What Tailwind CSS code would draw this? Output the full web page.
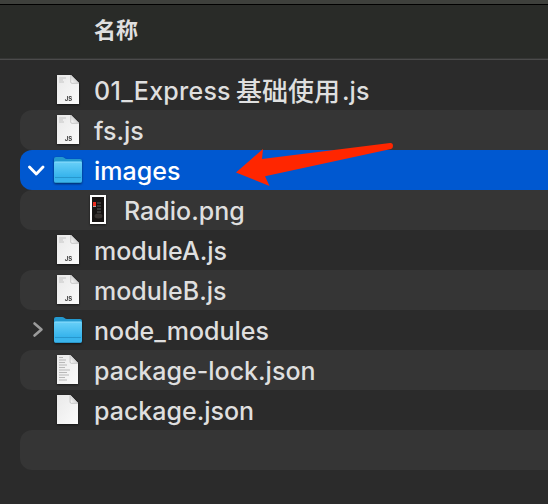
<!DOCTYPE html>
<html lang="zh">
<head>
<meta charset="utf-8">
<title>Files</title>
<script src="https://cdn.jsdelivr.net/npm/@tailwindcss/browser@4"></script>
</head>
<body class="w-[548px] h-[504px] overflow-hidden bg-[#2b2b2b] font-[Inter,'Noto_Sans_CJK_SC',sans-serif] text-[#dfdfdf]">
<svg class="absolute w-0 h-0">
  <defs>
    <linearGradient id="paper" x1="0" y1="0" x2="1" y2="1"><stop offset="0" stop-color="#e9e9e9"/><stop offset="1" stop-color="#fbfbfb"/></linearGradient>
    <linearGradient id="fold" x1="0" y1="1" x2="1" y2="0"><stop offset="0" stop-color="#fff"/><stop offset=".5" stop-color="#d4d4d4"/><stop offset="1" stop-color="#aaa"/></linearGradient>
    <linearGradient id="blue" x1="0" y1="0" x2="0" y2="1"><stop offset="0" stop-color="#69d0f8"/><stop offset=".7" stop-color="#37b4ec"/><stop offset="1" stop-color="#3cb5ec"/></linearGradient>
    <symbol id="page" viewBox="0 0 22 29" preserveAspectRatio="none"><path d="M0 0h14l8 8v21H0z" fill="url(#paper)"/><path d="M14 0v6.500q0 1.500 1.500 1.500H22z" fill="url(#fold)"/><path d="M13.700 0v7q0 1.300 1.300 1.300h7" fill="none" stroke="#aaa" stroke-width=".6"/></symbol>
    <symbol id="js" viewBox="0 0 22 29"><use href="#page"/><path d="M2 3h7M2 5h4M2 7h5" stroke="#bbb" stroke-width=".8"/><text x="11.500" y="25.800" text-anchor="middle" font-size="6" font-weight="700" fill="#444" textLength="7.500" lengthAdjust="spacingAndGlyphs">JS</text></symbol>
    <symbol id="folder" viewBox="0 0 28 26"><path d="M0 2Q0 0 2 0h6q1.500 0 2.500 1t2.500 1h13q2 0 2 2v18H0z" fill="#2499cf"/><path d="M0 6q0-1.500 1.500-1.500h25Q28 4.500 28 6v18q0 2-2 2H2q-2 0-2-2z" fill="url(#blue)"/><path d="M.5 5.200h27" stroke="#8adcfb" stroke-width=".8"/><path d="M1 20.500h26" stroke="#238fc5" stroke-width=".8"/><path d="M1 25.500h26" stroke="#278fc2" stroke-width=".8"/></symbol>
  </defs>
</svg>
<main class="relative w-full h-full">
  <div class="h-1 bg-[#3e403c]"></div>
  <div class="h-px bg-black"></div>
  <header class="h-[53px] bg-[#292b28] pl-[94px]"><div class="text-[22px] leading-[46px] font-bold font-['Noto_Sans_CJK_SC',sans-serif]">名称</div></header>
  <div class="h-px bg-[#353635]"></div>
  <div class="h-px bg-[#4b4b4b]"></div>
  <ul class="pt-[10px] pl-5 text-[25px] leading-[43px] font-medium">
    <li class="h-10 flex rounded-l-[12px]"><svg class="ml-[37px] mt-[5px] mr-[15px] w-[22px] h-[29px] drop-shadow-[0_1px_1px_#0008]"><use href="#js"/></svg><span class="w-[142px] tracking-[0.25px]">01_Express</span><span class="font-['Noto_Sans_CJK_SC',sans-serif] text-[26px] leading-10 w-[106px]">基础使用</span><span>.js</span></li>
    <li class="h-10 flex rounded-l-[12px] bg-[#353535]"><svg class="ml-[37px] mt-[5px] mr-[15px] w-[22px] h-[29px] drop-shadow-[0_1px_1px_#0008]"><use href="#js"/></svg><span>fs.js</span></li>
    <li class="h-10 flex rounded-l-[12px] bg-[#0058d0] text-white"><svg class="ml-2 mt-[15px] mr-[9px] w-[17px] h-[12px]"><path d="M1.500 2 8.300 9 15 2" fill="none" stroke="#fff" stroke-width="2.800" stroke-linecap="round" stroke-linejoin="round"/></svg><svg class="mt-[7px] mr-3 w-7 h-[26px] drop-shadow-[0_1px_1px_#0008]"><use href="#folder"/></svg><span>images</span></li>
    <li class="h-10 flex rounded-l-[12px] bg-[#353535]"><svg class="ml-[70px] mt-[5px] mr-[18px] w-4 h-[29px] drop-shadow-[0_1px_1px_#0008]"><path d="M0 0h16v29H0z" fill="#fff"/><path d="M2 2h12v25H2z" fill="#171413"/><path d="M3 7h3v4H3z" fill="#ec2d20"/><path d="M3 11h3v1H3z" fill="#a9a4a2"/><path d="M7 8h4M7 11h4M7 14h4M7 17h4" stroke="#5d5d5d" stroke-width="1"/><ellipse cx="8.500" cy="21" rx="4" ry="2.500" fill="#37322f"/></svg><span>Radio.png</span></li>
    <li class="h-10 flex rounded-l-[12px]"><svg class="ml-[37px] mt-[5px] mr-[15px] w-[22px] h-[29px] drop-shadow-[0_1px_1px_#0008]"><use href="#js"/></svg><span>moduleA.js</span></li>
    <li class="h-10 flex rounded-l-[12px] bg-[#353535]"><svg class="ml-[37px] mt-[5px] mr-[15px] w-[22px] h-[29px] drop-shadow-[0_1px_1px_#0008]"><use href="#js"/></svg><span>moduleB.js</span></li>
    <li class="h-10 flex rounded-l-[12px]"><svg class="ml-3 mt-[11px] mr-[10px] w-3 h-[18px]"><path d="M2.500 2.500 9.500 8.500 2.500 14.500" fill="none" stroke="#9b9b9b" stroke-width="2.600" stroke-linecap="round" stroke-linejoin="round"/></svg><svg class="mt-[7px] mr-3 w-7 h-[26px] drop-shadow-[0_1px_1px_#0008]"><use href="#folder"/></svg><span>node_modules</span></li>
    <li class="h-10 flex rounded-l-[12px] bg-[#353535]"><svg class="ml-[37px] mt-[5px] mr-[16px] w-[21px] h-[29px] drop-shadow-[0_1px_1px_#0008]"><use href="#page"/><path d="M2 2.500h4M2 5h7M2 7.500h6M2 10h8M2 12.500h6M2 15h11M2 17.500h8M2 20h10M2 22.500h6M2 25h8" stroke="#aaa" stroke-width=".8"/></svg><span>package-lock.json</span></li>
    <li class="h-10 flex rounded-l-[12px]"><svg class="ml-[37px] mt-[5px] mr-[16px] w-[21px] h-[29px] drop-shadow-[0_1px_1px_#0008]"><use href="#page"/></svg><span>package.json</span></li>
    <li class="h-10 rounded-l-[12px] bg-[#353535]"></li>
  </ul>
  <svg class="absolute left-[230px] top-[138px] w-[170px] h-[52px]"><path d="M6 34.500 33 11 32 21 160 5q3-.3 3 3 0 2.500-2 3L35 38.300 39.500 48z" fill="#ff2600"/></svg>
</main>
</body>
</html>
